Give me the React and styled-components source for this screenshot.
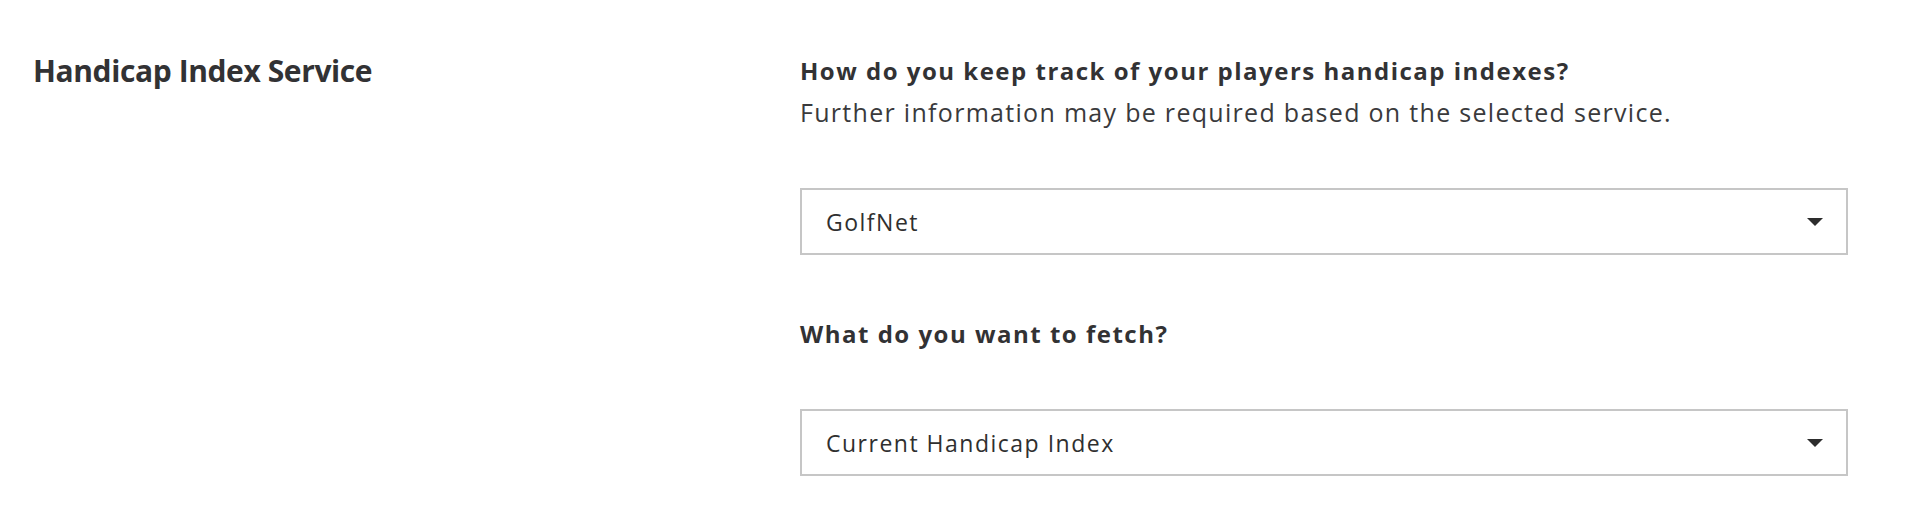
import React from 'react';
import styled, { createGlobalStyle } from 'styled-components';

const GlobalStyle = createGlobalStyle`
  body {
    margin: 0;
    background: #ffffff;
    font-family: "Open Sans", Lato, sans-serif;
    color: #333333;
  }
`;

const Section = styled.div`
  display: grid;
  grid-template-columns: 767px 1048px;
  padding: 50px 0 0 33px;
`;

const SectionTitle = styled.h2`
  margin: 0;
  font-size: 30px;
  line-height: 41px;
  font-weight: 700;
  letter-spacing: -0.4px;
  color: #323234;
`;

const Fields = styled.div`
  display: flex;
  flex-direction: column;
`;

const Field = styled.div`
  display: flex;
  flex-direction: column;
  margin-top: ${p => (p.first ? '0' : '58px')};
`;

const Label = styled.div`
  font-size: 24px;
  line-height: 41px;
  font-weight: 700;
  letter-spacing: 1.5px;
  color: #323234;
`;

const Help = styled.div`
  font-size: 25px;
  line-height: 42px;
  font-weight: 400;
  letter-spacing: 1.3px;
  color: #3a3a3c;
`;

const SelectBox = styled.div`
  display: flex;
  align-items: center;
  justify-content: space-between;
  box-sizing: border-box;
  height: 67px;
  margin-top: ${p => p.gap};
  padding: 0 23px 0 24px;
  border: 2px solid #c6c6c6;
  font-size: 23px;
  letter-spacing: 1.5px;
  color: #2f2f2f;
  cursor: pointer;
`;

const Caret = () => (
  <svg width="16" height="8" viewBox="0 0 16 8">
    <polygon points="0,0 16,0 8,8" fill="#2d2d2d" />
  </svg>
);

const Select = ({ value, gap }) => (
  <SelectBox gap={gap}>
    <span>{value}</span>
    <Caret />
  </SelectBox>
);

export default function App() {
  return (
    <>
      <GlobalStyle />
      <Section>
        <SectionTitle>Handicap Index Service</SectionTitle>
        <Fields>
          <Field first>
            <Label>How do you keep track of your players handicap indexes?</Label>
            <Help>Further information may be required based on the selected service.</Help>
            <Select value="GolfNet" gap="55px" />
          </Field>
          <Field>
            <Label>What do you want to fetch?</Label>
            <Select value="Current Handicap Index" gap="55px" />
          </Field>
        </Fields>
      </Section>
    </>
  );
}
